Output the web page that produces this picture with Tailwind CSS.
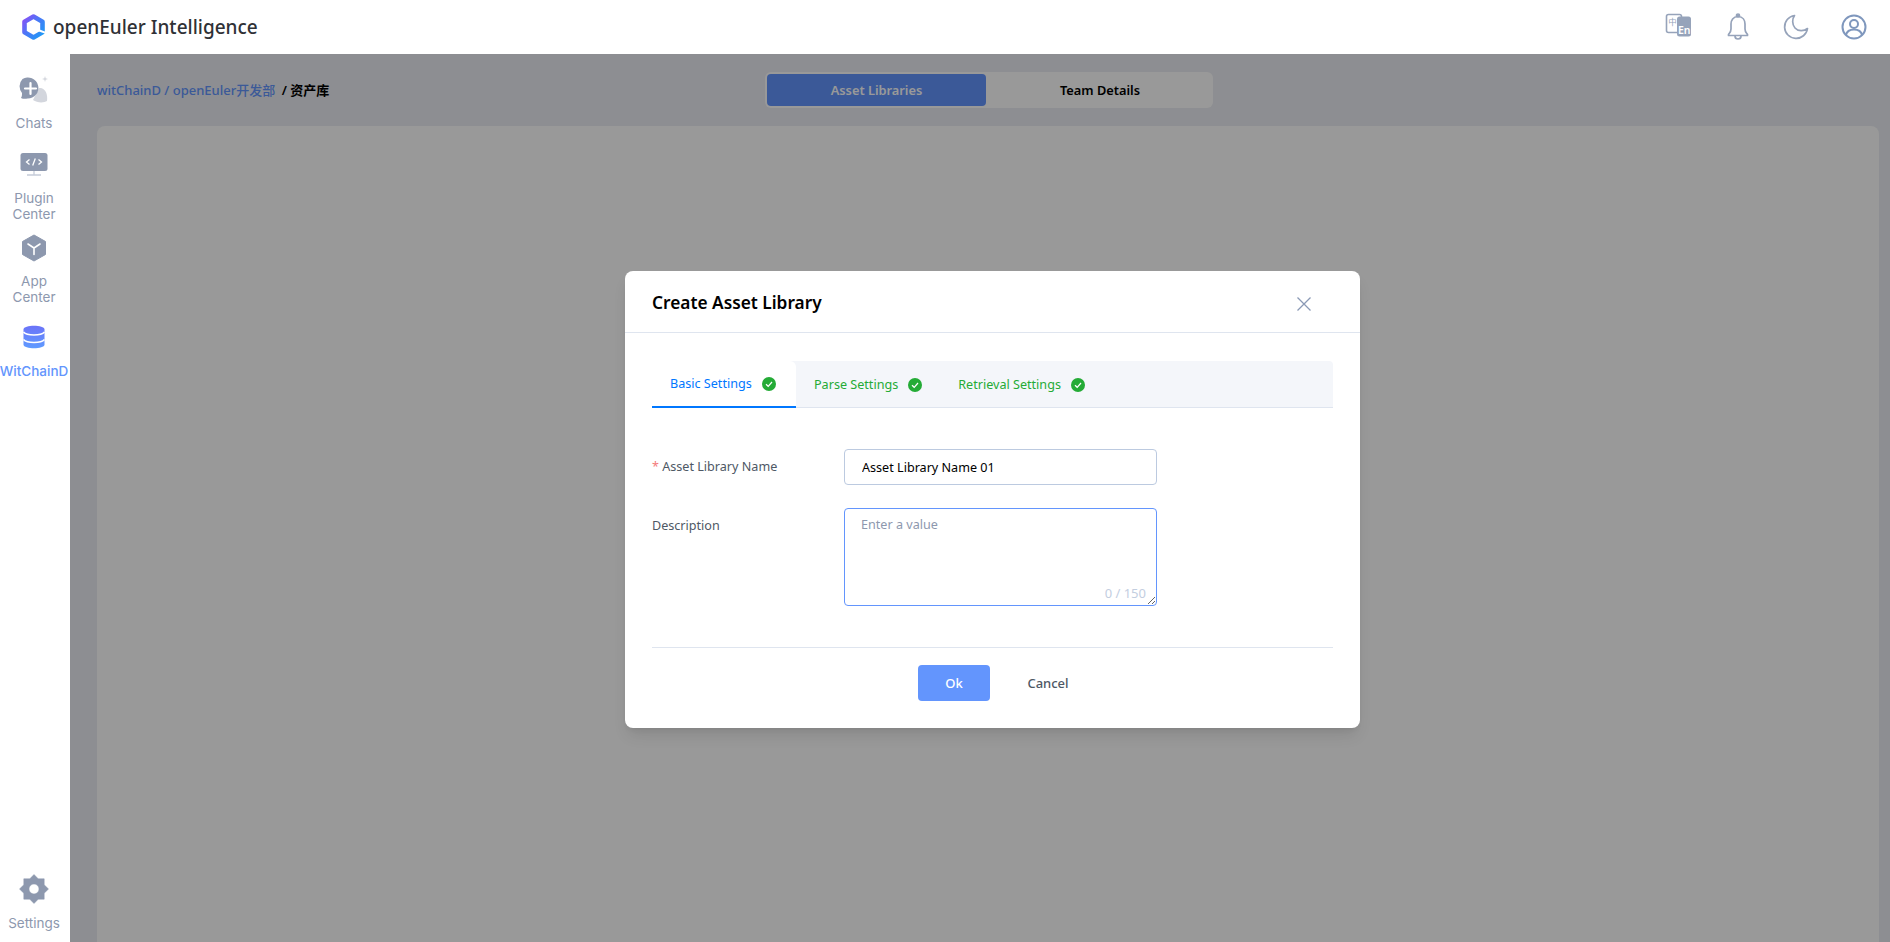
<!DOCTYPE html>
<html lang="en">
<head>
    <meta charset="UTF-8">
    <meta name="viewport" content="width=device-width, initial-scale=1.0">
    <title>openEuler Intelligence</title>
    <script src="https://cdn.jsdelivr.net/npm/@tailwindcss/browser@4"></script>
</head>
<body class="h-screen overflow-hidden bg-white font-['Noto_Sans','Noto_Sans_CJK_SC',sans-serif]">
    <!-- top bar -->
    <header class="h-[54px] flex items-center justify-between pl-[22px] pr-[23px] bg-white">
        <div class="flex items-center gap-[8px]">
            <svg class="w-[23px] h-[26px]" viewBox="0 0 23 26">
                <defs>
                    <linearGradient id="logoGrad" x1="0" y1="0" x2="1" y2="1">
                        <stop offset="0" stop-color="#8a4ff5"/>
                        <stop offset="0.45" stop-color="#4a78f7"/>
                        <stop offset="1" stop-color="#1c9cf5"/>
                    </linearGradient>
                </defs>
                <path d="M11.500 2.500 L20.500 7.700 V18.300 L11.500 23.500 L2.500 18.300 V7.700 Z" fill="none" stroke="url(#logoGrad)" stroke-width="4.600" stroke-linejoin="round"/>
                <path d="M14.500 15.500 L23 18.500" stroke="#fff" stroke-width="2"/>
            </svg>
            <span class="text-[19px] font-medium text-[#2f3136] leading-none">openEuler Intelligence</span>
        </div>
        <div class="flex items-center gap-[32px]">
            <svg class="w-[28px] h-[28px]" viewBox="0 0 28 28">
                <rect x="1.500" y="1.500" width="15" height="18" rx="2" fill="#fff" stroke="#96a3ba" stroke-width="1.600"/>
                <text x="3.200" y="11.500" font-size="8.500" fill="#96a3ba">中</text>
                <rect x="12" y="3.500" width="14" height="20" rx="2.500" fill="#96a3ba"/>
                <text x="13" y="20.500" font-size="10.500" font-weight="600" fill="#fff">En</text>
            </svg>
            <svg class="w-[26px] h-[28px]" viewBox="0 0 26 28" fill="none" stroke="#96a3ba" stroke-width="1.700" stroke-linejoin="round">
                <g transform="translate(0 -1)">
                    <path d="M13 4.500 C8 4.500 6 8.500 6 12 V17 C6 20 4.500 21 3.500 22.500 V23.500 H22.500 V22.500 C21.500 21 20 20 20 17 V12 C20 8.500 18 4.500 13 4.500 Z"/>
                    <circle cx="13" cy="3.500" r="1.500" fill="#96a3ba"/>
                    <path d="M10 24 A3 3 0 0 0 16 24"/>
                </g>
            </svg>
            <svg class="w-[26px] h-[26px]" viewBox="0 0 26 26" fill="none" stroke="#96a3ba" stroke-width="1.700" stroke-linecap="round" stroke-linejoin="round">
                <path d="M11.500 1.500 A11.500 11.500 0 1 0 24.500 14.500 C21 17.500 15 17.500 12 14 C9 10.500 9 5 11.500 1.500 Z"/>
            </svg>
            <svg class="w-[26px] h-[26px]" viewBox="0 0 26 26" fill="none" stroke="#7f97bd" stroke-width="2">
                <circle cx="13" cy="13" r="11.500"/>
                <circle cx="13" cy="10" r="4"/>
                <path d="M5 21 C6 16.500 9.500 15.500 13 15.500 C16.500 15.500 20 16.500 21 21"/>
            </svg>
        </div>
    </header>

    <div class="flex h-[888px]">
        <!-- side nav -->
        <nav class="w-[70px] shrink-0 flex flex-col items-center bg-white pt-[19px] pb-[11px] pr-[2px] text-[13.5px] leading-[16px] text-[#8d98ae] text-center font-['Inter',sans-serif]">
            <svg class="w-[32px] h-[32px]" viewBox="0 0 32 32">
                <path d="M21 15 C27 14 30 21 29 28 C26 30 19 30 15 27 Z" fill="#d3d6dd"/>
                <path d="M5 6.500 A10.500 10.500 0 1 1 10 26 C8 26.500 5.500 26.500 3.500 25.500 C4.500 24 4.500 22.500 4.500 20.500 A10.500 10.500 0 0 1 5 6.500 Z" fill="#8d98ae" transform="translate(-.5 -.5)"/>
                <path d="M12.500 10 V21 M7 15.500 H18" stroke="#fff" stroke-width="2.200" stroke-linecap="round"/>
                <path d="M27 3 L27.700 5.300 L30 6 L27.700 6.700 L27 9 L26.300 6.700 L24 6 L26.300 5.300 Z" fill="#d3d6dd"/>
            </svg>
            <span class="mt-[10px]">Chats</span>

            <svg class="w-[32px] h-[32px] mt-[17px]" viewBox="0 0 32 32">
                <rect x="2.500" y="5" width="27" height="18" rx="2.500" fill="#8d98ae"/>
                <path d="M16 23 V26.500 M9 27 H23" stroke="#c5ccd9" stroke-width="1.300"/>
                <path d="M11.500 11.500 L8.500 14 L11.500 16.500 M20.500 11.500 L23.500 14 L20.500 16.500 M17.300 10.500 L14.700 17.500" fill="none" stroke="#fff" stroke-width="1.300"/>
            </svg>
            <span class="mt-[10px]">Plugin<br>Center</span>

            <svg class="w-[32px] h-[32px] mt-[10px]" viewBox="0 0 32 32">
                <path d="M16 3 L27.500 9.500 V22.500 L16 29 L4.500 22.500 V9.500 Z" fill="#8d98ae" stroke="#8d98ae" stroke-width="1" stroke-linejoin="round"/>
                <path d="M10 12 L16 16 L22 12 M16 16 V22.500" fill="none" stroke="#fff" stroke-width="1.600" stroke-linecap="round" stroke-linejoin="round"/>
            </svg>
            <span class="mt-[9px]">App<br>Center</span>

            <svg class="w-[32px] h-[32px] mt-[16px]" viewBox="0 0 32 32">
                <defs>
                    <linearGradient id="dbGrad" x1="0" y1="0" x2="0" y2="1">
                        <stop offset="0" stop-color="#6b73f8"/>
                        <stop offset="1" stop-color="#5f9bff"/>
                    </linearGradient>
                </defs>
                <path d="M5.500 8.500 C5.500 3.500 26.500 3.500 26.500 8.500 V23.500 C26.500 28.500 5.500 28.500 5.500 23.500 Z" fill="url(#dbGrad)"/>
                <path d="M5.500 11 C9 15 23 15 26.500 11 M5.500 18.500 C9 22.500 23 22.500 26.500 18.500" fill="none" stroke="#fff" stroke-width="1.500"/>
            </svg>
            <span class="mt-[10px] text-[#6395fd] font-medium">WitChainD</span>

            <svg class="w-[32px] h-[32px] mt-auto" viewBox="0 0 32 32">
                <path fill-rule="evenodd" d="M16 1.500 L20.200 5.800 H26.200 V11.800 L30.500 16 L26.200 20.200 V26.200 H20.200 L16 30.500 L11.800 26.200 H5.800 V20.200 L1.500 16 L5.800 11.800 V5.800 H11.800 Z M16 11 A5 5 0 1 0 16 21 A5 5 0 1 0 16 11 Z" fill="#8d98ae" stroke="#8d98ae" stroke-width=".5" stroke-linejoin="round"/>
            </svg>
            <span class="mt-[10px]">Settings</span>
        </nav>

        <main class="relative flex-1 flex flex-col bg-[#ebedf3]">
            <div class="h-[72px] shrink-0 flex items-center pl-[27px]">
                <div class="w-[668px] pt-[1px] text-[13px] font-medium text-[#6395fd]">witChainD / openEuler开发部 <span class="ml-[3px] font-semibold text-black">/ 资产库</span></div>
                <div class="w-[448px] h-[36px] p-[2px] flex rounded-[6px] bg-white text-[12.8px] font-semibold">
                    <div class="w-[219px] pt-[1px] flex items-center justify-center rounded-[4px] bg-[#6395fd] text-white">Asset Libraries</div>
                    <div class="flex-1 pt-[1px] pl-[3px] flex items-center justify-center text-black">Team Details</div>
                </div>
            </div>
            <div class="flex-1 ml-[27px] mr-[11px] rounded-t-[8px] bg-white"></div>

            <!-- dialog mask -->
            <div class="absolute inset-0 flex items-center justify-center pl-[25px] bg-black/40">
                <div class="w-[735px] h-[457px] mt-[3px] flex flex-col rounded-[8px] bg-white shadow-lg">
                    <div class="h-[62px] shrink-0 flex items-center justify-between pl-[27px] pr-[48px] border-b border-[#dfe5ef]">
                        <h2 class="pt-[3px] text-[17.3px] font-semibold text-black">Create Asset Library</h2>
                        <svg class="w-[16px] h-[16px] mt-[5px]" viewBox="0 0 16 16" fill="none" stroke="#8a99b5" stroke-width="1.300"><path d="M1.500 1.500 L14.500 14.500 M14.500 1.500 L1.500 14.500"/></svg>
                    </div>
                    <div class="flex-1 flex flex-col px-[27px] pt-[28px]">
                        <div class="h-[47px] shrink-0 flex rounded-t-[4px] bg-[#f4f6fa] border-b border-[#dfe5ef] text-[12.6px] text-[#24ab36]">
                            <div class="w-[144px] flex items-center pl-[18px] -mb-[1px] rounded-tr-[6px] bg-white border-b-2 border-[#0077ff] text-[#0077ff]">
                                <span class="mt-[2px]">Basic Settings</span>
                                <svg class="w-[14px] h-[14px] ml-[10px]" viewBox="0 0 14 14"><circle cx="7" cy="7" r="7" fill="#24ab36"/><path d="M4 7.200 L6.200 9.300 L10 5" fill="none" stroke="#fff" stroke-width="1.200"/></svg>
                            </div>
                            <div class="flex items-center pl-[18px] pt-[1px]">
                                <span class="mt-[2px]">Parse Settings</span>
                                <svg class="w-[14px] h-[14px] ml-[10px]" viewBox="0 0 14 14"><circle cx="7" cy="7" r="7" fill="#24ab36"/><path d="M4 7.200 L6.200 9.300 L10 5" fill="none" stroke="#fff" stroke-width="1.200"/></svg>
                            </div>
                            <div class="flex items-center pl-[36px] pt-[1px]">
                                <span class="mt-[2px]">Retrieval Settings</span>
                                <svg class="w-[14px] h-[14px] ml-[10px]" viewBox="0 0 14 14"><circle cx="7" cy="7" r="7" fill="#24ab36"/><path d="M4 7.200 L6.200 9.300 L10 5" fill="none" stroke="#fff" stroke-width="1.200"/></svg>
                            </div>
                        </div>

                        <div class="mt-[41px] flex items-center text-[12.6px] text-[#4e5865]">
                            <label class="w-[192px]"><span class="text-[#f47a7a]">*</span> Asset Library Name</label>
                            <input value="Asset Library Name 01" class="w-[313px] h-[36px] px-[17px] rounded-[4px] border border-[#bccae0] text-[12.6px] text-black outline-none">
                        </div>
                        <div class="mt-[23px] flex text-[12.6px] text-[#4e5865]">
                            <label class="w-[192px] pt-[9px]">Description</label>
                            <div class="relative w-[313px] h-[98px]">
                                <textarea placeholder="Enter a value" class="block w-full h-full px-[16px] py-[7px] rounded-[4px] border border-[#6395fd] text-[12.6px] text-black outline-none resize placeholder:text-[#8d98ae]"></textarea>
                                <span class="absolute right-[11px] bottom-[3px] text-[13px] text-[#c3cedf]">0 / 150</span>
                            </div>
                        </div>

                        <div class="mt-[41px] pt-[17px] pl-[17px] flex justify-center gap-[22px] border-t border-[#dfe5ef] text-[13px] font-medium">
                            <button class="w-[72px] h-[36px] pt-[2px] rounded-[4px] bg-[#6395fd] text-white">Ok</button>
                            <button class="w-[72px] h-[36px] pt-[2px] text-[#4e5865]">Cancel</button>
                        </div>
                    </div>
                </div>
            </div>
        </main>
    </div>
</body>
</html>
